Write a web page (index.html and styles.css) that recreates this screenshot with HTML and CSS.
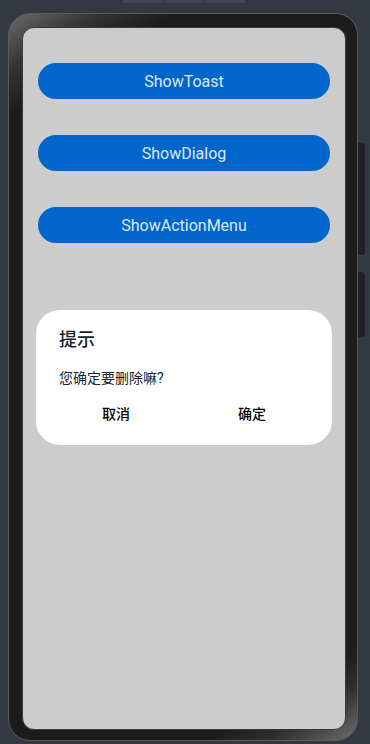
FILE: index.html
```html
<!DOCTYPE html>
<html lang="zh-CN">
<head>
    <meta charset="UTF-8">
    <meta name="viewport" content="width=device-width, initial-scale=1.0">
    <title>Dialog预览</title>
    <link rel="stylesheet" href="styles.css">
</head>
<body>
    <div class="tabs">
        <span></span><span></span><span></span>
    </div>

    <div class="device">
        <div class="frame">
            <div class="screen">
                <button class="btn">ShowToast</button>
                <button class="btn">ShowDialog</button>
                <button class="btn">ShowActionMenu</button>

                <div class="dialog">
                    <div class="dialog-title">提示</div>
                    <div class="dialog-msg">您确定要删除嘛?</div>
                    <div class="dialog-actions">
                        <button class="action">取消</button>
                        <button class="action">确定</button>
                    </div>
                </div>
            </div>
        </div>
        <div class="side-keys">
            <div class="key key-long"></div>
            <div class="key key-short"></div>
        </div>
    </div>
</body>
</html>
```

FILE: styles.css
```css
body {
    margin: 0;
    background-color: #343842;
    font-family: Roboto, "Noto Sans CJK SC", sans-serif;
    height: 744px;
    overflow: hidden;
}
.tabs {
    display: flex;
    width: 122px;
    height: 3px;
    margin-left: 123px;
    gap: 1px;
    background-color: #2c3038;
}
.tabs span {
    flex: 1;
    background-color: #41454e;
}
.device {
    display: flex;
    margin-top: 10px;
    margin-left: 8px;
}
.frame {
    width: 350px;
    height: 728px;
    box-sizing: border-box;
    padding: 13px 11px 10px 13px;
    border: 1px solid #5a5a5a;
    border-radius: 22px;
    background: linear-gradient(148deg, #6a6a6a 0%, #333 6%, #1c1c1c 11%, #1c1c1c 90%, #2e2e2e 94%, #6c6c6c 100%);
}
.screen {
    height: 100%;
    box-sizing: border-box;
    padding: 35px 15px 0;
    background-color: #cccccc;
    border: 1px solid #3a3a3a;
    border-radius: 12px;
    display: flex;
    flex-direction: column;
    align-items: center;
}
.btn {
    width: 292px;
    height: 36px;
    margin-bottom: 36px;
    border: none;
    border-radius: 18px;
    background-color: #0066cc;
    color: #dfe6f0;
    font-family: Roboto, sans-serif;
    font-size: 16px;
    padding: 0;
}
.dialog {
    width: 296px;
    box-sizing: border-box;
    margin-top: 31px;
    padding: 18px 12px 12px;
    background-color: #fff;
    border-radius: 24px;
}
.dialog-title {
    padding-left: 11px;
    font-size: 18px;
    line-height: 24px;
    font-weight: 500;
    color: #182431;
}
.dialog-msg {
    margin-top: 16px;
    padding-left: 11px;
    font-size: 14px;
    line-height: 20px;
    color: #182431;
}
.dialog-actions {
    display: flex;
    margin-top: 5px;
}
.action {
    flex: 1;
    height: 40px;
    border: none;
    background: none;
    font-family: "Noto Sans CJK SC", sans-serif;
    font-size: 14px;
    font-weight: 500;
    color: #000;
    padding: 0;
}
.side-keys {
    display: flex;
    flex-direction: column;
}
.key {
    width: 7px;
    background-color: #1f2024;
    border-radius: 0 4px 4px 0;
}
.key-long {
    height: 112px;
    margin-top: 130px;
}
.key-short {
    height: 65px;
    margin-top: 17px;
}
```
